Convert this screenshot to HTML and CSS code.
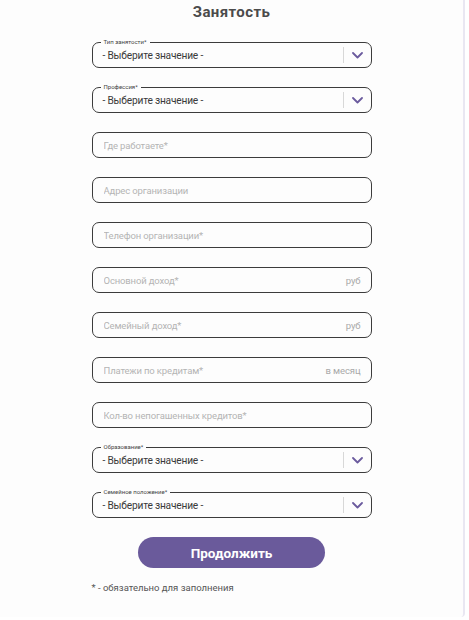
FILE: index.html
```html
<!DOCTYPE html>
<html lang="ru">
<head>
<meta charset="utf-8">
<title>Занятость</title>
<link rel="stylesheet" href="styles.css">
</head>
<body>
<div class="page">
  <h1 class="title">Занятость</h1>
  <form class="form">
    <div class="select">
      <span class="select-label">Тип занятости*</span>
      <span class="select-value">- Выберите значение -</span>
      <span class="select-arrow"><svg width="11" height="7" viewBox="0 0 11 7"><path d="M1 1l4.5 4.5L10 1" fill="none" stroke="#6b5b9e" stroke-width="1.8" stroke-linecap="round" stroke-linejoin="round"/></svg></span>
    </div>
    <div class="select">
      <span class="select-label">Профессия*</span>
      <span class="select-value">- Выберите значение -</span>
      <span class="select-arrow"><svg width="11" height="7" viewBox="0 0 11 7"><path d="M1 1l4.5 4.5L10 1" fill="none" stroke="#6b5b9e" stroke-width="1.8" stroke-linecap="round" stroke-linejoin="round"/></svg></span>
    </div>
    <div class="field"><input class="field-input" placeholder="Где работаете*"></div>
    <div class="field"><input class="field-input" placeholder="Адрес организации"></div>
    <div class="field"><input class="field-input" placeholder="Телефон организации*"></div>
    <div class="field"><input class="field-input" placeholder="Основной доход*"><span class="suffix">руб</span></div>
    <div class="field"><input class="field-input" placeholder="Семейный доход*"><span class="suffix">руб</span></div>
    <div class="field"><input class="field-input" placeholder="Платежи по кредитам*"><span class="suffix">в месяц</span></div>
    <div class="field"><input class="field-input" placeholder="Кол-во непогашенных кредитов*"></div>
    <div class="select">
      <span class="select-label">Образование*</span>
      <span class="select-value">- Выберите значение -</span>
      <span class="select-arrow"><svg width="11" height="7" viewBox="0 0 11 7"><path d="M1 1l4.5 4.5L10 1" fill="none" stroke="#6b5b9e" stroke-width="1.8" stroke-linecap="round" stroke-linejoin="round"/></svg></span>
    </div>
    <div class="select">
      <span class="select-label">Семейное положение*</span>
      <span class="select-value">- Выберите значение -</span>
      <span class="select-arrow"><svg width="11" height="7" viewBox="0 0 11 7"><path d="M1 1l4.5 4.5L10 1" fill="none" stroke="#6b5b9e" stroke-width="1.8" stroke-linecap="round" stroke-linejoin="round"/></svg></span>
    </div>
    <div class="actions"><button type="button" class="btn">Продолжить</button></div>
    <p class="note">* - обязательно для заполнения</p>
  </form>
</div>
</body>
</html>
```

FILE: styles.css
```css
html, body {
  margin: 0;
  padding: 0;
  background: #ffffff;
}

.page {
  width: 465px;
  height: 617px;
  box-sizing: border-box;
  background: #fdfdfd;
  border-right: 2px solid #e9e7f2;
  border-bottom-right-radius: 4px;
  font-family: Roboto, "Noto Sans", sans-serif;
  display: flex;
  flex-direction: column;
  align-items: center;
}

.title {
  margin: 0;
  height: 24px;
  line-height: 24px;
  font-size: 15px;
  font-weight: 700;
  color: #4b4b4b;
  letter-spacing: 0.4px;
}

.form {
  margin-top: 18px;
  width: 280px;
  display: flex;
  flex-direction: column;
  gap: 19px;
}

.field, .select {
  position: relative;
  height: 26px;
  box-sizing: border-box;
  border: 1px solid #3c3c3c;
  border-radius: 7px;
  display: flex;
  align-items: center;
  background: #fdfdfd;
}

.field-input {
  flex: 1;
  min-width: 0;
  border: 0;
  outline: 0;
  background: transparent;
  padding: 0 0 0 11px;
  height: 100%;
  font-family: Roboto, "Noto Sans", sans-serif;
  font-size: 9.5px;
  letter-spacing: -0.15px;
  color: #333;
}

.field-input::placeholder {
  color: #b4b4b4;
}

.suffix {
  padding-right: 10px;
  font-size: 9.5px;
  letter-spacing: -0.1px;
  color: #a9a9a9;
}

.select-label {
  position: absolute;
  top: -5px;
  left: 8px;
  padding: 0 3px;
  background: #fdfdfd;
  font-size: 6px;
  line-height: 8px;
  color: #444;
}

.select-value {
  flex: 1;
  padding-left: 10px;
  font-size: 10.2px;
  letter-spacing: -0.2px;
  color: #3a3a3a;
}

.select-arrow {
  width: 27px;
  height: 16px;
  border-left: 1px solid #d8d8d8;
  display: flex;
  align-items: center;
  justify-content: center;
}

.actions {
  display: flex;
  justify-content: center;
}

.btn {
  width: 187px;
  height: 31px;
  border: 0;
  border-radius: 16px;
  background: #6a5a9b;
  color: #ffffff;
  font-family: Roboto, "Noto Sans", sans-serif;
  font-size: 13.5px;
  font-weight: 700;
  cursor: pointer;
}

.note {
  margin: -5px 0 0;
  font-size: 9.5px;
  line-height: 12px;
  color: #555;
}
```
